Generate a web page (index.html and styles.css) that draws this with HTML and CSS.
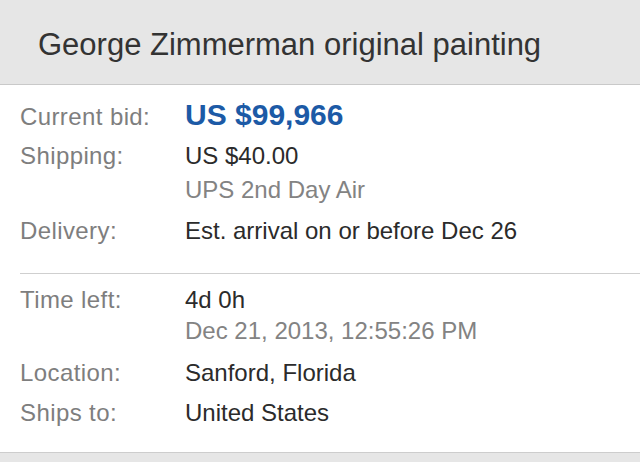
FILE: index.html
```html
<!DOCTYPE html>
<html>
<head>
<meta charset="utf-8">
<link rel="stylesheet" href="styles.css">
</head>
<body>
<div class="page">
  <header class="title-bar">
    <h1 class="title">George Zimmerman original painting</h1>
  </header>
  <section class="section section-first">
    <div class="row row-bid">
      <div class="label">Current bid:</div>
      <div class="value price">US $99,966</div>
    </div>
    <div class="row row-ship">
      <div class="label">Shipping:</div>
      <div class="value">
        <div class="line">US $40.00</div>
        <div class="line sub sub-ship">UPS 2nd Day Air</div>
      </div>
    </div>
    <div class="row row-delivery">
      <div class="label">Delivery:</div>
      <div class="value">Est. arrival on or before Dec 26</div>
    </div>
  </section>
  <section class="section section-second">
    <div class="row">
      <div class="label">Time left:</div>
      <div class="value">
        <div class="line">4d 0h</div>
        <div class="line sub sub-time">Dec 21, 2013, 12:55:26 PM</div>
      </div>
    </div>
    <div class="row row-location">
      <div class="label">Location:</div>
      <div class="value">Sanford, Florida</div>
    </div>
    <div class="row row-gap">
      <div class="label">Ships to:</div>
      <div class="value">United States</div>
    </div>
  </section>
  <footer class="bottom-bar"></footer>
</div>
</body>
</html>
```

FILE: styles.css
```css
html, body {
  margin: 0;
  padding: 0;
  background: #ffffff;
}
.page {
  width: 640px;
  height: 462px;
  overflow: hidden;
  display: flex;
  flex-direction: column;
  font-family: "Liberation Sans", Arial, sans-serif;
}
.title-bar {
  background: #e6e6e6;
  border-bottom: 1px solid #c9c9c9;
  height: 85px;
  box-sizing: border-box;
  padding: 27px 0 0 38px;
}
.title {
  margin: 0;
  font-weight: normal;
  font-size: 31px;
  line-height: 36px;
  color: #333333;
}
.section {
  margin-left: 20px;
  display: flex;
  flex-direction: column;
}
.section-first {
  padding-top: 12px;
  padding-bottom: 24px;
  border-bottom: 1px solid #cfcfcf;
}
.section-second {
  padding-top: 8px;
  flex: 1;
}
.row {
  display: flex;
  align-items: baseline;
  font-size: 24px;
  line-height: 36px;
}
.row-ship {
  margin-top: 3px;
}
.row-delivery {
  margin-top: 7px;
}
.row-location {
  margin-top: 11px;
}
.row-gap {
  margin-top: 4px;
}
.label {
  width: 165px;
  flex: none;
  color: #7e7e7e;
  letter-spacing: 0.4px;
}
.value {
  color: #2b2b2b;
}
.line.sub {
  color: #838383;
}
.sub-ship {
  line-height: 32px;
}
.sub-time {
  line-height: 26px;
}
.price {
  color: #1c5aa6;
  font-size: 30px;
  font-weight: bold;
}
.bottom-bar {
  height: 9px;
  flex: none;
  background: #e6e6e6;
  border-top: 1px solid #cdcdcd;
}
```
